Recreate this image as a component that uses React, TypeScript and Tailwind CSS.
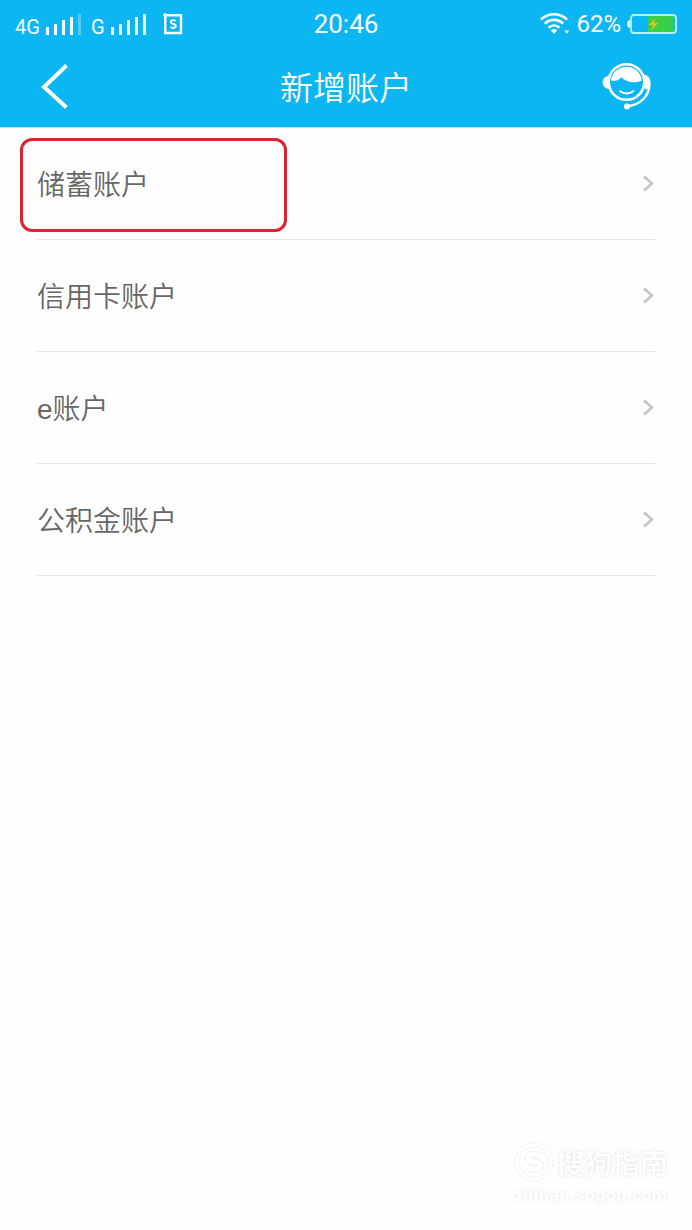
import { useState } from 'react';

const accounts = [
  { id: 'savings', label: '储蓄账户' },
  { id: 'credit', label: '信用卡账户' },
  { id: 'e-account', label: 'e账户' },
  { id: 'fund', label: '公积金账户' },
];

function SignalBars({ level }: { level: number }) {
  return (
    <svg width="36" height="22" viewBox="0 0 36 22" fill="#fff" aria-hidden="true">
      {[8, 11, 15, 18, 21].map((h, i) => (
        <rect key={h} x={i * 8} y={22 - h} width="3" height={h} opacity={i < level ? 0.95 : 0.3} />
      ))}
    </svg>
  );
}

function SimIcon() {
  return (
    <svg width="20" height="22" viewBox="0 0 20 22" fill="none" stroke="#fff" aria-hidden="true">
      <path d="M2.2 2.2H18V20H2.2Z" strokeWidth="2.4" />
      <path d="M0 2.2h3M2.2 0v3" strokeWidth="2" />
      <path d="M12.6 8.2C11.6 6.6 7.8 6.6 7.8 9c0 2.6 5 1.4 5 4.1 0 2.3-4 2.4-5.2.6" strokeWidth="1.9" />
    </svg>
  );
}

function WifiIcon() {
  return (
    <svg width="30" height="22" viewBox="0 0 30 22" fill="none" stroke="#fff" aria-hidden="true">
      <path d="M1 6.5C8.5-.5 19.5-.5 27 6.5" strokeWidth="2.6" />
      <path d="M4.8 10.6c5.4-5 13-5 18.4 0" strokeWidth="2.6" />
      <path d="M8.6 14.6c3.2-2.9 7.6-2.9 10.8 0" strokeWidth="2.6" />
      <path d="M10.8 17.2c1.8-1.5 4.6-1.5 6.4 0L14 21Z" fill="#fff" stroke="none" />
      <path d="M24.4 17.6h4.8l-2.4 3.2Z" fill="#fff" stroke="none" />
    </svg>
  );
}

function BatteryIcon() {
  return (
    <svg width="50" height="20" viewBox="0 0 50 20" fill="none" aria-hidden="true">
      <path d="M3 6.2C.4 6.2.2 8 .2 10s.2 3.8 2.8 3.8Z" fill="#e8fbff" />
      <rect x="21" y="1.5" width="26" height="17" fill="#38d048" />
      <rect x="4" y="1" width="45" height="18" rx="3" stroke="#b5f3fb" strokeWidth="1.8" />
      <path d="M28.6 4 21.8 11h4.6l-2.8 5.8 7.8-7.8h-4.8Z" fill="#f5bf1b" />
    </svg>
  );
}

function ServiceIcon() {
  return (
    <svg width="50" height="50" viewBox="0 0 50 50" fill="none" stroke="#fff" aria-hidden="true">
      <circle cx="24.5" cy="21" r="17.8" strokeWidth="2.6" />
      <path d="M7 14.8C3.2 15 .6 18 .6 21.4s2.8 6.4 6.8 6.4Z" fill="#fff" stroke="none" />
      <path d="M42 13.4c4 .8 6.6 4 6.6 8.4 0 3-1.2 5.600-5 6.800l-1.600-2Z" fill="#fff" stroke="none" />
      <path d="M8.800 19.400C10 11.600 16.400 5.800 24.500 5.800c8.300 0 14.300 5.600 15.300 13.600-7.400 3.400-15.400 2-20.400-3.200-2.600 3-6.400 4.400-10.600 3.200Z" fill="#fff" stroke="none" />
      <path d="M18.200 30.200c3.600 3 9.400 3 13 0" strokeWidth="2" strokeLinecap="round" />
      <path d="M47.400 23c-.2 12-8.400 20.600-22.400 22.400" strokeWidth="2.400" />
      <circle cx="25" cy="45.400" r="3" fill="#fff" stroke="none" />
    </svg>
  );
}

function StatusBar() {
  return (
    <div className="grid h-12 grid-cols-[1fr_auto_1fr] items-center px-[15px] font-['Roboto',sans-serif]">
      <div className="flex items-end text-xl leading-4">
        <span className="w-[31px]">4G</span>
        <SignalBars level={4} />
        <span className="ml-[9px] w-5">G</span>
        <SignalBars level={5} />
        <span className="ml-4">
          <SimIcon />
        </span>
      </div>
      <span className="text-[26px] leading-8">20:46</span>
      <div className="flex items-center justify-end">
        <WifiIcon />
        <span className="mx-1.5 text-[24px] leading-8">62%</span>
        <BatteryIcon />
      </div>
    </div>
  );
}

function Watermark() {
  return (
    <div className="fixed bottom-5 right-6 text-white">
      <div className="flex items-center gap-0.5">
        <svg width="40" height="40" viewBox="0 0 40 40" fill="none" aria-hidden="true">
          <circle cx="20" cy="20" r="17" stroke="#f3f3f3" strokeWidth="5" />
          <circle cx="20" cy="20" r="17" stroke="#fff" strokeWidth="3" />
          <path d="M28 14.500c-4-3-14-3-14 1.500S27 19.500 27 24s-11 4-15 1" stroke="#f0f0f0" strokeWidth="7" />
          <path d="M28 14.500c-4-3-14-3-14 1.500S27 19.500 27 24s-11 4-15 1" stroke="#fff" strokeWidth="5" />
        </svg>
        <span className="text-[28px] font-medium leading-10 [text-shadow:0_0_3px_#dcdcdc]">搜狗指南</span>
      </div>
      <div className="font-['DejaVu_Sans',sans-serif] text-[15px] font-bold leading-7 [text-shadow:0_0_3px_#e2e2e2]">
        zhinan.sogou.com
      </div>
    </div>
  );
}

export default function App() {
  const [selected, setSelected] = useState('savings');

  return (
    <div className="min-h-screen bg-[#fefefe] font-['Noto_Sans_CJK_SC',sans-serif]">
      <header className="border-b border-[#a9e4fb] bg-[#0cb6f3] text-white">
        <StatusBar />
        <div className="flex h-[79px] items-center justify-between px-10 pb-1">
          <button type="button" aria-label="返回" className="w-[50px]">
            <svg width="30" height="46" viewBox="0 0 30 46" fill="none" stroke="#fff" strokeWidth="4" aria-hidden="true">
              <path d="M26.500 2.500 4 24l22.500 20.500" />
            </svg>
          </button>
          <h1 className="text-[33px] font-[350] leading-10">新增账户</h1>
          <button type="button" aria-label="在线客服">
            <ServiceIcon />
          </button>
        </div>
      </header>

      <main>
        <ul>
          {accounts.map((account) => (
            <li key={account.id} className="relative px-[37px]">
              <button
                type="button"
                onClick={() => setSelected(account.id)}
                className="flex h-28 w-full items-center justify-between border-b border-[#e6e6e6] text-left"
              >
                <span className="pt-1 font-['Liberation_Sans','Noto_Sans_CJK_SC',sans-serif] text-[28px] font-[350] leading-10 text-[#666]">
                  {account.label}
                </span>
                <svg width="13" height="18" viewBox="0 0 13 18" fill="none" stroke="#c4c4c4" strokeWidth="2.6" aria-hidden="true">
                  <path d="M2 1.500l8 7-8 7" />
                </svg>
              </button>
              {selected === account.id && (
                <span className="pointer-events-none absolute bottom-2 left-5 top-2.5 w-[267px] rounded-xl border-3 border-[#dc2430]" />
              )}
            </li>
          ))}
        </ul>
      </main>

      <Watermark />
    </div>
  );
}
